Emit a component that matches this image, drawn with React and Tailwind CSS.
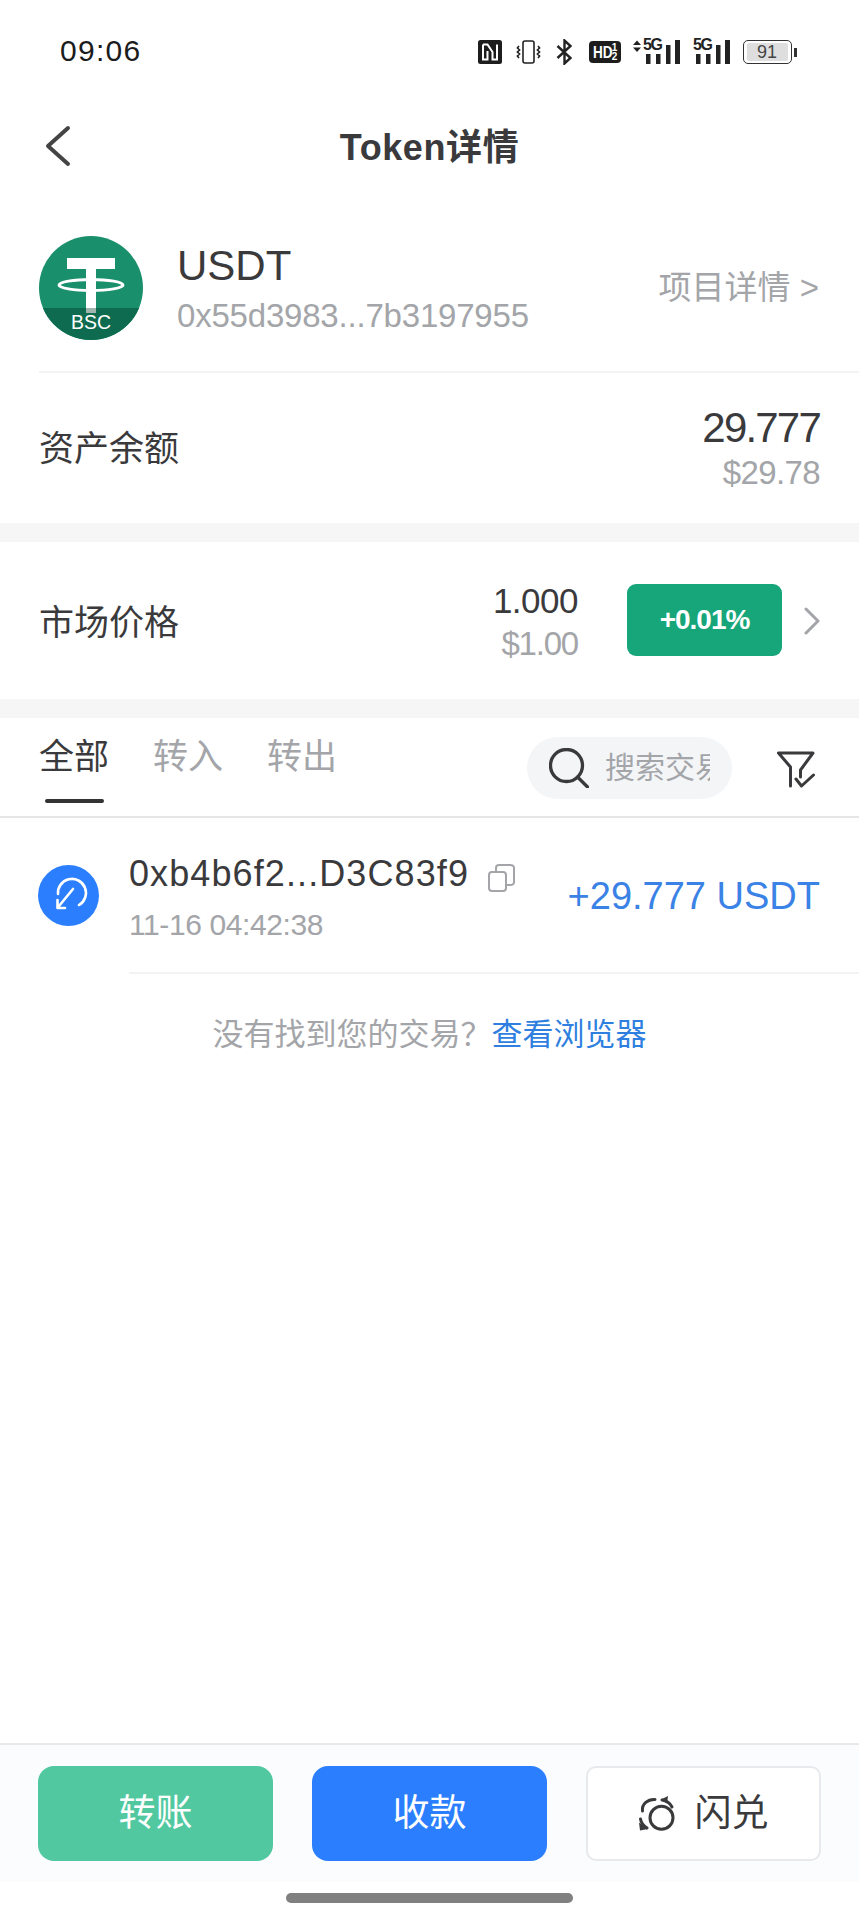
import React from "react";

const FONT = "font-['Liberation_Sans','Noto_Sans_CJK_SC',sans-serif]";

function SignalBars({ x = 0 }) {
  return (
    <g fill="#222">
      <rect x={x} y="14" width="4.5" height="10" />
      <rect x={x + 10} y="14" width="4.5" height="10" />
      <rect x={x + 20} y="5" width="4.5" height="19" />
      <rect x={x + 29} y="0" width="5" height="24" />
    </g>
  );
}

function FiveG({ className }) {
  return <span className={`absolute top-[-3px] text-[16px] leading-[16px] font-bold tracking-[-1.500px] text-[#222] ${className}`}>5G</span>;
}

function StatusIcons() {
  return (
    <div className="flex items-center">
      {/* nfc */}
      <svg width="24" height="24" viewBox="0 0 24 24">
        <rect width="24" height="24" rx="2.5" fill="#1d1d1d" />
        <path d="M5 4.500H9.500L14.500 12V19.500H19V4.500M5 4.500V19.500H9.500V11" fill="none" stroke="#fff" strokeWidth="2" />
      </svg>
      {/* vibrate */}
      <svg width="25" height="24" viewBox="0 0 25 24" className="ml-[14px]" fill="none" stroke="#222" strokeWidth="1.6">
        <rect x="7" y="1" width="11" height="22" rx="2" />
        <path d="M3 6l-1.600 2 2.200 2-2.200 2 2.200 2-2.200 2L3 18M22 6l1.600 2-2.200 2 2.200 2-2.200 2 2.200 2L22 18" />
      </svg>
      {/* bluetooth */}
      <svg width="16" height="26" viewBox="0 0 16 26" className="ml-[15px]" fill="none" stroke="#222" strokeWidth="2.4">
        <path d="M1.500 7l13 12-6 5.500V1.500l6 5.500-13 12" />
      </svg>
      {/* hd */}
      <div className="ml-[17px] flex h-[22px] w-[32px] items-center justify-center rounded-[4px] bg-[#1d1d1d] text-white">
        <span className="inline-block w-[19px] origin-left scale-x-[0.8] text-[17px] leading-none font-bold">HD</span>
        <span className="flex flex-col text-[10px] leading-[9px] font-bold">
          <span>1</span>
          <span>2</span>
        </span>
      </div>
      {/* sim 1 */}
      <div className="relative ml-[12px] h-[24px] w-[47px]">
        <svg width="47" height="24" viewBox="0 0 47 24" className="absolute top-0 left-0">
          <path d="M0 5L4 0.500L8 5zM0 7.500L4 12L8 7.500z" fill="#222" />
          <SignalBars x={13} />
        </svg>
        <FiveG className="left-[10px]" />
      </div>
      {/* sim 2 */}
      <div className="relative ml-[13px] h-[24px] w-[37px]">
        <svg width="37" height="24" viewBox="0 0 37 24" className="absolute top-0 left-0">
          <SignalBars x={3} />
        </svg>
        <FiveG className="left-0" />
      </div>
      {/* battery */}
      <div className="ml-[13px] flex items-center">
        <div className="flex h-[24px] w-[49px] items-center rounded-[5px] border-[1.5px] border-[#333] py-[2px] pl-[2.500px]">
          <div className="flex h-full w-[41px] items-center justify-center rounded-[2px] bg-[#dedede] text-[18px] leading-none text-[#444]">91</div>
        </div>
        <div className="ml-[2px] h-[9px] w-[3px] bg-[#333]" />
      </div>
    </div>
  );
}

function TokenIcon() {
  return (
    <svg width="104" height="104" viewBox="0 0 104 104" className="shrink-0">
      <defs>
        <clipPath id="coin">
          <circle cx="52" cy="52" r="52" />
        </clipPath>
      </defs>
      <g clipPath="url(#coin)">
        <rect width="104" height="104" fill="#1a8f6c" />
        <rect x="28" y="22" width="48" height="11" fill="#fff" />
        <rect x="47" y="33" width="10" height="39" fill="#fff" />
        <ellipse cx="52" cy="49" rx="32" ry="5.500" fill="none" stroke="#fff" strokeWidth="3" />
        <rect y="72" width="104" height="32" fill="#0f6b4f" />
        <rect x="47" y="72" width="10" height="5" fill="#9fb5ad" />
        <text x="52" y="93" textAnchor="middle" fontSize="20" textLength="40" lengthAdjust="spacingAndGlyphs" fill="#fff" fontFamily="Liberation Sans">BSC</text>
      </g>
    </svg>
  );
}

function TxIcon() {
  return (
    <svg width="61" height="61" viewBox="0 0 61 61" className="shrink-0" fill="none" stroke="#fff" strokeWidth="2.600" strokeLinecap="round" strokeLinejoin="round">
      <circle cx="30.500" cy="30.500" r="30.500" fill="#2b7fff" stroke="none" />
      <path d="M20 29A14 14 0 1 1 41 40" />
      <path d="M35 24L21 41M19.500 35V43H27" />
    </svg>
  );
}

function SwapIcon() {
  return (
    <svg width="36" height="36" viewBox="0 0 36 36" fill="none" stroke="#3a3a3c" strokeWidth="3" strokeLinecap="round">
      <circle cx="22.500" cy="21.700" r="11.500" />
      <path d="M3.500 15C2.500 8 9 3 16 3.500" />
      <path d="M23 4C27 4.500 31 7 33 11" />
      <path d="M29 0L22 3.500L28 7.500z" fill="#3a3a3c" stroke="none" />
      <path d="M1.500 23C2 26.500 4 29.500 8 32" />
      <path d="M0 26.500L1 34.500L9 33z" fill="#3a3a3c" stroke="none" />
    </svg>
  );
}

function Divider({ className }) {
  return <div className={className} />;
}

export default function App() {
  return (
    <div className={`${FONT} flex h-[1920px] w-[859px] flex-col overflow-hidden bg-white text-[#3a3a3c]`}>
      {/* status bar */}
      <div className="flex h-[100px] shrink-0 items-start justify-between pt-[39px] pr-[62px] pl-[60px]">
        <span className="text-[30px] leading-[24px] tracking-[1.300px] text-[#1c1c1c]">09:06</span>
        <StatusIcons />
      </div>

      {/* nav */}
      <div className="relative flex h-[95px] shrink-0 items-center justify-center">
        <svg width="28" height="42" viewBox="0 0 28 42" className="absolute top-[25px] left-[44px]" fill="none" stroke="#444" strokeWidth="4" strokeLinecap="round" strokeLinejoin="round">
          <path d="M24 3L4 21L24 39" />
        </svg>
        <span className="text-[36px] leading-none font-bold tracking-[0.6px] text-[#3a3a3c]">Token详情</span>
      </div>

      {/* token head */}
      <div className="flex h-[176px] shrink-0 items-center pt-[9px] pr-[40px] pl-[39px]">
        <TokenIcon />
        <div className="ml-[34px] flex flex-col">
          <span className="text-[42px] leading-[48px]">USDT</span>
          <span className="mt-[8px] text-[33px] leading-[36px] tracking-[-0.2px] text-[#a3a5a9]">0x55d3983...7b3197955</span>
        </div>
        <span className="ml-auto text-[33px] text-[#a3a5a9]">项目详情 &gt;</span>
      </div>
      <Divider className="ml-[39px] h-[2px] shrink-0 bg-[#f3f3f3]" />

      {/* balance */}
      <div className="flex h-[150px] shrink-0 items-center justify-between pr-[39px] pl-[39px]">
        <span className="mt-[2px] text-[35px]">资产余额</span>
        <div className="flex flex-col items-end">
          <span className="text-[42px] leading-[50px] tracking-[-1.800px]">29.777</span>
          <span className="text-[33px] leading-[40px] tracking-[-0.6px] text-[#a3a5a9]">$29.78</span>
        </div>
      </div>
      <Divider className="h-[19px] shrink-0 bg-[#f6f6f6]" />

      {/* market */}
      <div className="flex h-[157px] shrink-0 items-center pr-[38px] pl-[39px]">
        <span className="mt-[6px] text-[35px]">市场价格</span>
        <div className="ml-auto flex flex-col items-end pt-[2px]">
          <span className="text-[35px] leading-[44px] tracking-[-0.5px]">1.000</span>
          <span className="text-[33px] leading-[42px] tracking-[-1.2px] text-[#a3a5a9]">$1.00</span>
        </div>
        <div className="mb-[2px] ml-[49px] flex h-[72px] w-[155px] items-center justify-center rounded-[9px] bg-[#17a67a] text-[28px] font-bold tracking-[-1px] text-white">+0.01%</div>
        <svg width="18" height="28" viewBox="0 0 18 28" className="ml-[21px]" fill="none" stroke="#a3a5a9" strokeWidth="3" strokeLinecap="round" strokeLinejoin="round">
          <path d="M3 2L15 14L3 26" />
        </svg>
      </div>
      <Divider className="h-[19px] shrink-0 bg-[#f6f6f6]" />

      {/* tabs */}
      <div className="flex h-[100px] shrink-0 items-start border-b-2 border-[#e6e6e6] pr-[44px] pl-[39px]">
        <div className="flex w-[70px] flex-col items-center">
          <span className="mt-[19px] text-[35px] leading-[40px]">全部</span>
          <span className="mt-[22px] h-[4px] w-[59px] rounded-full bg-[#333]" />
        </div>
        <span className="mt-[19px] ml-[44px] text-[35px] leading-[40px] text-[#a3a5a9]">转入</span>
        <span className="mt-[19px] ml-[44px] text-[35px] leading-[40px] text-[#a3a5a9]">转出</span>
        <div className="mt-[19px] ml-auto flex h-[62px] w-[205px] items-center rounded-full bg-[#f4f5f7] pl-[22px]">
          <svg width="40" height="40" viewBox="0 0 40 40" className="shrink-0" fill="none" stroke="#3a3a3c" strokeWidth="3.300" strokeLinecap="round">
            <circle cx="17.500" cy="17.500" r="16" />
            <path d="M28.500 29L38.500 39" />
          </svg>
          <span className="ml-[16px] w-[105px] overflow-hidden text-[30px] leading-[36px] whitespace-nowrap text-[#a3a5a9]">搜索交易</span>
        </div>
        <svg width="38" height="37" viewBox="0 0 38 37" className="mt-[33px] ml-[45px]" fill="none" stroke="#3a3a3c" strokeWidth="3" strokeLinecap="round" strokeLinejoin="round">
          <path d="M13.500 35V16L1.500 2H36L23.500 19V26M19 28L24.500 35L36.500 24" />
        </svg>
      </div>

      {/* tx */}
      <div className="flex h-[154px] shrink-0 pr-[39px] pl-[38px]">
        <div className="mt-[47px]">
          <TxIcon />
        </div>
        <div className="ml-[30px] flex flex-col pt-[36px]">
          <div className="flex items-center">
            <span className="text-[36px] leading-[40px] tracking-[1.100px]">0xb4b6f2...D3C83f9</span>
            <svg width="27" height="28" viewBox="0 0 27 28" className="ml-[19px] mt-[8px]" fill="none" stroke="#a3a5a9" strokeWidth="2" strokeLinejoin="round">
              <rect x="1" y="8" width="17" height="19" rx="3" />
              <path d="M8 8V4C8 2 9 1 11 1H22C24 1 26 2 26 4V18C26 20 24 21 22 21H18" />
            </svg>
          </div>
          <span className="mt-[13px] text-[30px] leading-[36px] tracking-[-0.4px] text-[#a3a5a9]">11-16 04:42:38</span>
        </div>
        <span className="mt-[56px] ml-auto text-[38px] leading-[44px] text-[#3b82e6]">+29.777 USDT</span>
      </div>
      <Divider className="ml-[129px] h-[2px] shrink-0 bg-[#f3f3f3]" />

      {/* hint */}
      <div className="mt-[42px] flex shrink-0 justify-center text-[31px] leading-[38px]">
        <span className="text-[#a3a5a9]">没有找到您的交易？</span>
        <span className="text-[#2f7fe0]">查看浏览器</span>
      </div>

      <div className="flex-1" />

      {/* actions */}
      <div className="flex h-[139px] shrink-0 gap-[39px] border-t-2 border-[#e8e8e8] bg-[#fbfcfe] pt-[21px] pl-[38px]">
        <div className="flex h-[95px] w-[235px] items-center justify-center rounded-[16px] bg-[#52c8a0] text-[37px] text-white">转账</div>
        <div className="flex h-[95px] w-[235px] items-center justify-center rounded-[16px] bg-[#2b7fff] text-[37px] text-white">收款</div>
        <div className="flex h-[95px] w-[235px] items-center justify-center rounded-[10px] border-2 border-[#e8e9ec] bg-white text-[37px]">
          <SwapIcon />
          <span className="ml-[20px]">闪兑</span>
        </div>
      </div>

      {/* home bar */}
      <div className="flex h-[38px] shrink-0 justify-center pt-[11px]">
        <div className="h-[10px] w-[287px] rounded-full bg-[#808080]" />
      </div>
    </div>
  );
}
